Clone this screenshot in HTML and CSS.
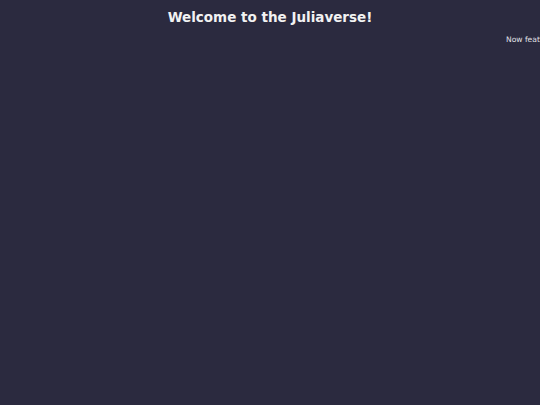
FILE: index.html
```html
<!DOCTYPE html>
<html>
<head>
<meta charset="utf-8">
<link rel="stylesheet" href="styles.css">
</head>
<body>
<h1 class="title">Welcome to the Juliaverse!</h1>
<div class="ticker"><span class="ticker-text">Now featuring the latest packages, news and events from the Julia community</span></div>
</body>
</html>
```
FILE: styles.css
```css
html, body {
  margin: 0;
  padding: 0;
  background: #2b2a3f;
  height: 100%;
}
body {
  font-family: "DejaVu Sans", sans-serif;
  color: #f2f2f2;
  overflow: hidden;
}
.title {
  margin: 0;
  padding-top: 8px;
  font-size: 13.5px;
  font-weight: bold;
  text-align: center;
  line-height: 18px;
}
.ticker {
  margin-top: 9px;
  white-space: nowrap;
  overflow: hidden;
  padding-left: 506px;
  font-size: 7.6px;
  line-height: 10px;
  color: #e0e0e6;
}
```
